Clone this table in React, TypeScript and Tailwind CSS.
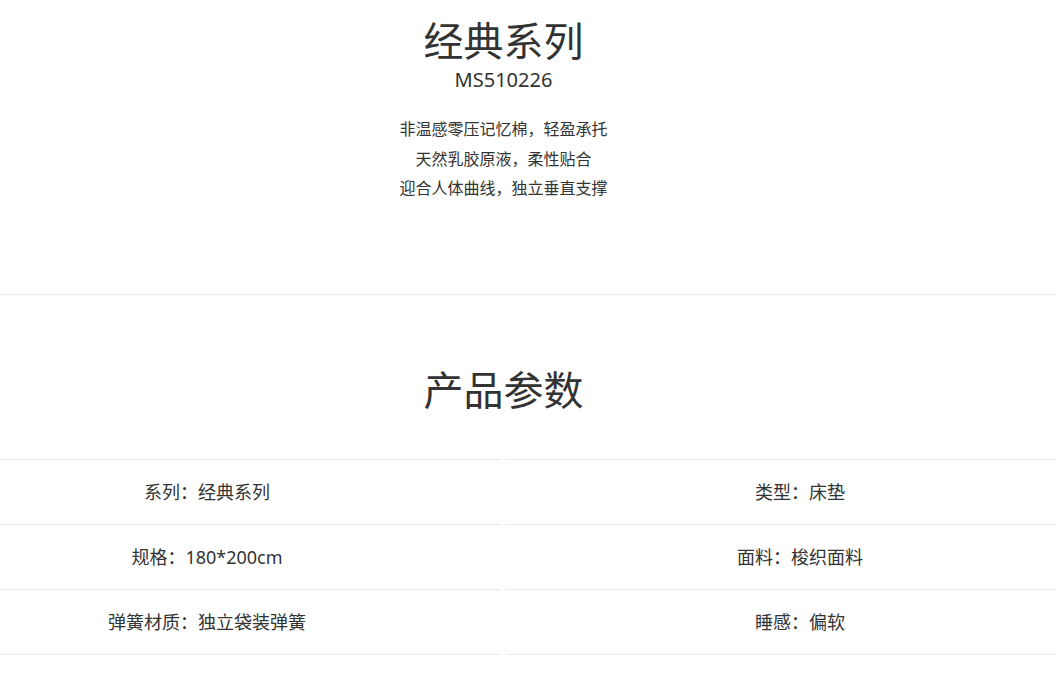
const features = [
  "非温感零压记忆棉，轻盈承托",
  "天然乳胶原液，柔性贴合",
  "迎合人体曲线，独立垂直支撑",
];

const params: [string, string][] = [
  ["系列：经典系列", "类型：床垫"],
  ["规格：180*200cm", "面料：梭织面料"],
  ["弹簧材质：独立袋装弹簧", "睡感：偏软"],
];

export default function App() {
  return (
    <div className="min-h-[692px] bg-white font-['Noto_Sans','Noto_Sans_CJK_SC',sans-serif] text-[#333]">
      {/* product intro */}
      <section className="border-b border-[#e8e8e8] pt-[17px] pr-[50px] pb-[90.5px] text-center">
        <h1 className="text-[40px] leading-[48px] font-normal">经典系列</h1>
        <p className="text-[20px] leading-[30px]">MS510226</p>
        <div className="mt-[20px] text-[16px] leading-[29.5px]">
          {features.map((f) => (
            <p key={f}>{f}</p>
          ))}
        </div>
      </section>

      {/* params */}
      <section className="pt-[71px]">
        <h2 className="pr-[50px] text-center text-[40px] leading-[48px] font-normal">产品参数</h2>
        <div className="mt-[45px] grid grid-cols-[501px_1fr] gap-x-[5px]">
          {params.map(([left, right], i) => (
            <div key={left} className="contents">
              <div
                className={`flex h-[65px] items-center justify-center border-b border-[#ebebeb] pr-[87px] text-[18px] ${
                  i === 0 ? "border-t h-[66px]" : ""
                }`}
              >
                {left}
              </div>
              <div
                className={`flex h-[65px] items-center justify-center border-b border-[#ebebeb] pl-[37px] text-[18px] ${
                  i === 0 ? "border-t h-[66px]" : ""
                }`}
              >
                {right}
              </div>
            </div>
          ))}
        </div>
      </section>
    </div>
  );
}
